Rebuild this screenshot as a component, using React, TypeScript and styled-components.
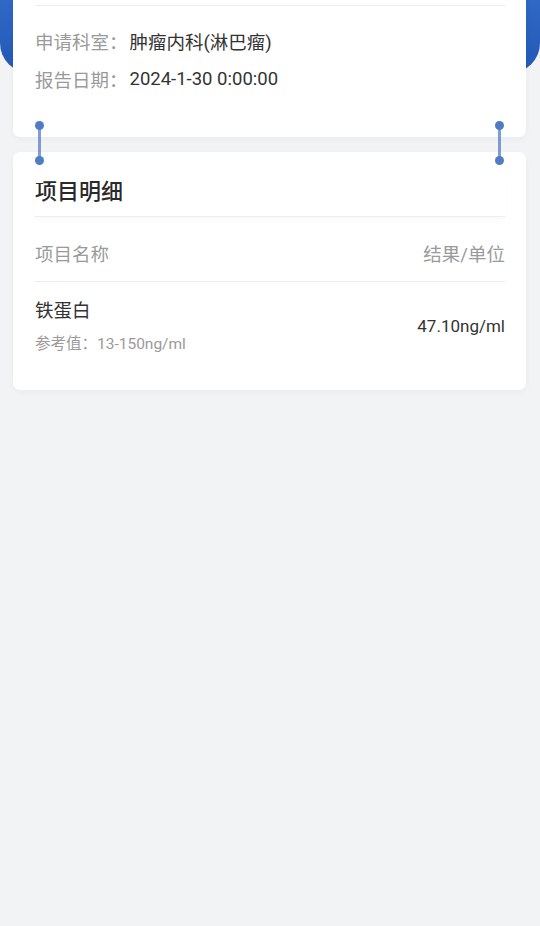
import React, { FC } from "react";
import styled, { createGlobalStyle } from "styled-components";

const GlobalStyle = createGlobalStyle`
  html, body {
    margin: 0;
    padding: 0;
    background: #f2f3f5;
    font-family: Roboto, "Noto Sans CJK SC", sans-serif;
    text-spacing-trim: space-all;
  }
`;

const info = [
  { label: "申请科室：", value: "肿瘤内科(淋巴瘤)" },
  { label: "报告日期：", value: "2024-1-30 0:00:00" },
];

const items = [{ name: "铁蛋白", range: "13-150ng/ml", result: "47.10ng/ml" }];

export default function App() {
  return (
    <Page>
      <GlobalStyle />
      <HeaderBg />
      <Content>
        <InfoCard>
          <CardTop />
          <InfoList>
            {info.map((row) => (
              <InfoRow key={row.label}>
                <Label>{row.label}</Label>
                <Value>{row.value}</Value>
              </InfoRow>
            ))}
          </InfoList>
        </InfoCard>

        <DetailCard>
          <Link side="left" />
          <Link side="right" />
          <Title>项目明细</Title>
          <Table>
            <HeadRow>
              <span>项目名称</span>
              <span>结果/单位</span>
            </HeadRow>
            {items.map((item) => (
              <ItemRow key={item.name}>
                <div>
                  <ItemName>{item.name}</ItemName>
                  <ItemRange>参考值：{item.range}</ItemRange>
                </div>
                <ItemResult>{item.result}</ItemResult>
              </ItemRow>
            ))}
          </Table>
        </DetailCard>
      </Content>
    </Page>
  );
}

const Link: FC<{ side: "left" | "right" }> = ({ side }) => (
  <Connector side={side}>
    <Dot />
    <Bar />
    <Dot />
  </Connector>
);

const Page = styled.div`
  position: relative;
  min-height: 926px;
  overflow: hidden;
`;

const HeaderBg = styled.div`
  position: absolute;
  top: 0;
  left: 0;
  right: 0;
  height: 73px;
  background: linear-gradient(180deg, #3068c6 0%, #2358b5 100%);
  border-radius: 0 0 30px 30px;
`;

const Content = styled.div`
  position: relative;
  display: flex;
  flex-direction: column;
  gap: 15px;
  padding: 0 14px 0 13px;
`;

const Card = styled.div`
  position: relative;
  background: #ffffff;
  border-radius: 7px;
  box-shadow: 0 2px 6px rgba(0, 0, 0, 0.04);
`;

const InfoCard = styled(Card)`
  margin-top: -20px;
`;

const CardTop = styled.div`
  height: 25px;
  margin: 0 21px 0 22px;
  border-bottom: 1px solid #ececec;
`;

const InfoList = styled.div`
  padding: 16px 22px 39px;
`;

const InfoRow = styled.div`
  display: flex;
  align-items: center;
  height: 38px;
  font-size: 18.5px;
`;

const Label = styled.span`
  margin-right: 2px;
  color: #9a9a9a;
`;

const Value = styled.span`
  color: #333333;
`;

const DetailCard = styled(Card)``;

const Connector = styled.div<{ side: "left" | "right" }>`
  position: absolute;
  top: -31px;
  ${({ side }) => (side === "left" ? "left: 22px;" : "right: 22px;")}
  display: flex;
  flex-direction: column;
  align-items: center;
  width: 9px;
  z-index: 2;
`;

const Dot = styled.div`
  width: 9px;
  height: 9px;
  border-radius: 50%;
  background: #4f7cc4;
`;

const Bar = styled.div`
  width: 3px;
  height: 28px;
  margin: -1px 0;
  background: rgba(84, 126, 196, 0.75);
`;

const Title = styled.div`
  height: 65px;
  margin: 0 21px 0 22px;
  display: flex;
  align-items: center;
  padding-top: 10px;
  box-sizing: border-box;
  font-size: 22px;
  font-weight: 500;
  color: #2a2a2a;
  border-bottom: 1px solid #eeeeee;
  box-shadow: 0 4px 6px rgba(0, 0, 0, 0.025);
`;

const Table = styled.div`
  padding: 0 21px 0 22px;
`;

const HeadRow = styled.div`
  display: flex;
  justify-content: space-between;
  padding: 24px 0 12px;
  line-height: 28px;
  font-size: 18.5px;
  color: #9a9a9a;
  border-bottom: 1px solid #ececec;
`;

const ItemRow = styled.div`
  display: flex;
  justify-content: space-between;
  align-items: center;
  padding: 16px 0 35px;
`;

const ItemName = styled.div`
  font-size: 18.5px;
  line-height: 26px;
  color: #333;
`;

const ItemRange = styled.div`
  margin-top: 9px;
  font-size: 15.5px;
  line-height: 22px;
  color: #9a9a9a;
`;

const ItemResult = styled.div`
  font-size: 17px;
  color: #333;
  margin-top: -2px;
`;
